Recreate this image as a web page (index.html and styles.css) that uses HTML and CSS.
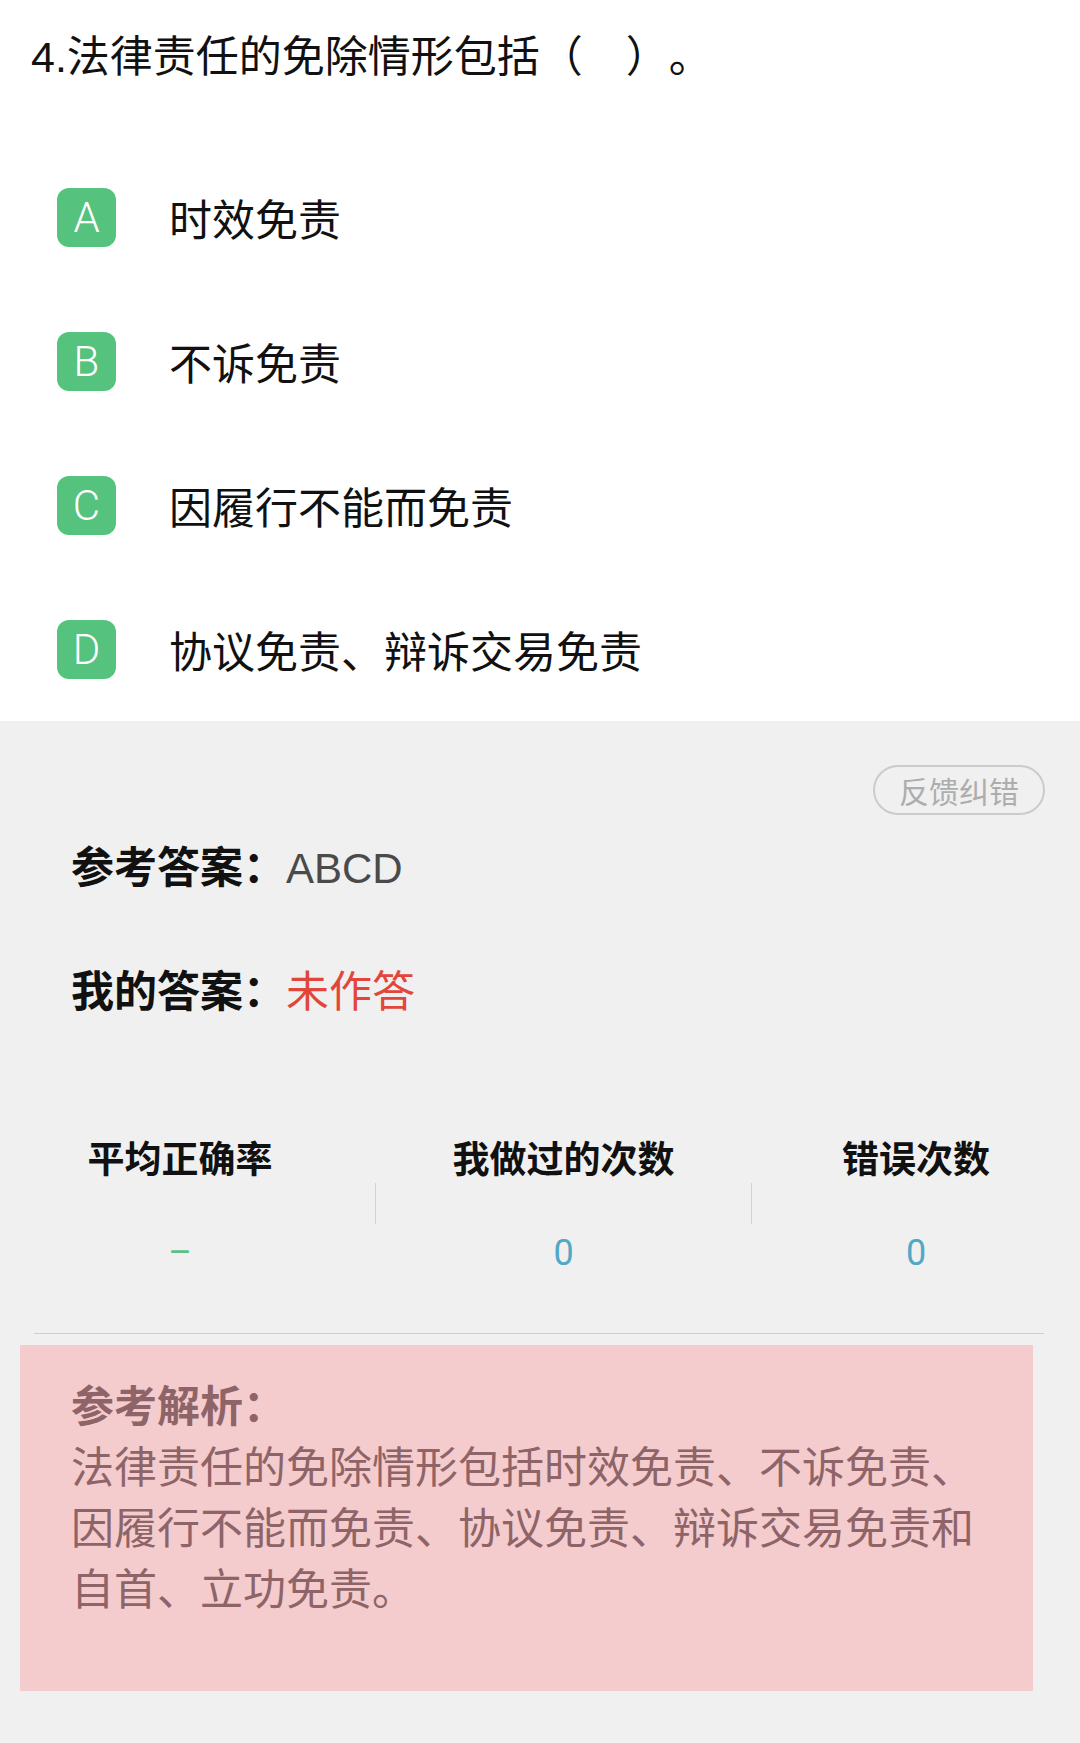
FILE: index.html
```html
<!DOCTYPE html>
<html lang="zh-CN">
<head>
  <meta charset="UTF-8" />
  <meta name="viewport" content="width=device-width, initial-scale=1.0" />
  <title>题目解析</title>
  <link rel="stylesheet" href="styles.css">
</head>
<body>
  <section class="question">
    <h1 class="stem">4.法律责任的免除情形包括（　）。</h1>
    <ul class="options">
      <li class="option"><span class="badge">A</span><span class="option-text">时效免责</span></li>
      <li class="option"><span class="badge">B</span><span class="option-text">不诉免责</span></li>
      <li class="option"><span class="badge">C</span><span class="option-text">因履行不能而免责</span></li>
      <li class="option"><span class="badge">D</span><span class="option-text">协议免责、辩诉交易免责</span></li>
    </ul>
  </section>

  <section class="answer-panel">
    <div class="feedback-row">
      <button class="feedback">反馈纠错</button>
    </div>

    <div class="answer-line">
      <span class="label">参考答案：</span><span class="correct">ABCD</span>
    </div>
    <div class="answer-line second">
      <span class="label">我的答案：</span><span class="mine">未作答</span>
    </div>

    <div class="stats">
      <div class="stat first">
        <div class="stat-title">平均正确率</div>
        <div class="stat-value green">–</div>
      </div>
      <span class="stat-divider"></span>
      <div class="stat middle">
        <div class="stat-title">我做过的次数</div>
        <div class="stat-value blue">0</div>
      </div>
      <span class="stat-divider"></span>
      <div class="stat last">
        <div class="stat-title">错误次数</div>
        <div class="stat-value blue">0</div>
      </div>
    </div>

    <div class="rule"></div>

    <div class="analysis">
      <div class="analysis-title">参考解析：</div>
      <p>法律责任的免除情形包括时效免责、不诉免责、因履行不能而免责、协议免责、辩诉交易免责和自首、立功免责。</p>
    </div>
  </section>
</body>
</html>
```

FILE: styles.css
```css
body {
  font-family: "Liberation Sans", "Noto Sans CJK SC", sans-serif;
  text-spacing-trim: space-all;
  background: #f0f0f0;
  margin: 0;
  padding: 0;
  min-height: 100vh;
  color: #111;
}
.question {
  background: #fff;
}
.stem {
  margin: 0;
  padding: 28px 31px 0;
  font-size: 43px;
  line-height: 58px;
  font-weight: 400;
  color: #111;
}
.options {
  list-style-type: none;
  margin: 59px 0 0;
  padding: 0;
}
.option {
  display: flex;
  align-items: center;
  height: 144px;
  padding-left: 57px;
}
.badge {
  width: 59px;
  height: 59px;
  border-radius: 12px;
  background: #55c27d;
  color: #fff;
  font-family: Roboto, sans-serif;
  font-weight: 300;
  font-size: 42px;
  display: flex;
  align-items: center;
  justify-content: center;
}
.option-text {
  margin-left: 53px;
  font-size: 43px;
  color: #111;
}
.answer-panel {
  padding-top: 44px;
  padding-bottom: 55px;
}
.feedback-row {
  display: flex;
  justify-content: flex-end;
  padding-right: 35px;
}
.feedback {
  width: 172px;
  height: 50px;
  border: 2px solid #cbcbcb;
  border-radius: 25px;
  background: transparent;
  color: #adadad;
  font-family: "Noto Sans CJK SC", sans-serif;
  font-size: 30px;
  padding: 0;
  line-height: 46px;
}
.answer-line {
  margin-top: 23px;
  padding-left: 71px;
  font-size: 43px;
  line-height: 60px;
}
.answer-line.second {
  margin-top: 63px;
}
.label {
  font-weight: 700;
  color: #111;
}
.correct {
  color: #4a4a4a;
  font-size: 42px;
}
.mine {
  color: #e2463a;
}
.stats {
  display: flex;
  margin-top: 114px;
}
.stat {
  text-align: center;
}
.stat.first {
  width: 360px;
  margin-right: 15px;
}
.stat.middle {
  width: 375px;
}
.stat.last {
  flex: 1;
}
.stat-title {
  font-size: 37px;
  font-weight: 700;
  line-height: 50px;
  color: #111;
}
.stat-value {
  margin-top: 42px;
  font-family: Roboto, sans-serif;
  font-size: 36px;
  line-height: 50px;
}
.stat-divider {
  width: 1px;
  height: 41px;
  margin-top: 47px;
  background: #d2d2d2;
}
.green {
  color: #5cbf86;
}
.blue {
  color: #51a8c5;
}
.rule {
  height: 1px;
  background: #cfcfcf;
  margin: 55px 36px 0 34px;
}
.analysis {
  margin: 11px 0 0 20px;
  width: 1013px;
  box-sizing: border-box;
  padding: 32px 51px 70px;
  background: #f4cccd;
  color: #8e6468;
  font-size: 43px;
  line-height: 61px;
}
.analysis-title {
  font-weight: 700;
}
.analysis p {
  margin: 0;
}
```
